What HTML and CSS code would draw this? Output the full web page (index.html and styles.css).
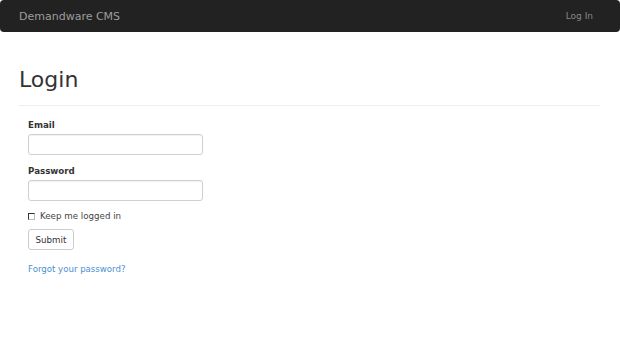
FILE: index.html
```html
<!DOCTYPE html>
<html>
<head>
<meta charset="utf-8">
<link rel="stylesheet" href="styles.css">
</head>
<body>
<nav class="navbar">
  <a class="brand" href="#">Demandware CMS</a>
  <a class="nav-link" href="#">Log In</a>
</nav>
<div class="container">
  <h1 class="page-header">Login</h1>
  <form class="login-form">
    <div class="form-group">
      <label class="label">Email</label>
      <input class="input" type="text">
    </div>
    <div class="form-group">
      <label class="label">Password</label>
      <input class="input" type="password">
    </div>
    <div class="check-row">
      <span class="checkbox"></span>
      <span class="check-label">Keep me logged in</span>
    </div>
    <button class="btn" type="button">Submit</button>
    <a class="forgot" href="#">Forgot your password?</a>
  </form>
</div>
</body>
</html>
```
FILE: styles.css
```css
html, body {
  margin: 0;
  padding: 0;
  background: #fff;
  font-family: "DejaVu Sans", Verdana, sans-serif;
  color: #333;
}
.navbar {
  height: 32px;
  background: #222;
  border-radius: 4px;
  display: flex;
  align-items: center;
  justify-content: space-between;
  padding: 0 27px 0 19px;
}
.brand {
  color: #9d9d9d;
  font-size: 11px;
  text-decoration: none;
}
.nav-link {
  color: #888;
  font-size: 9px;
  text-decoration: none;
}
.container {
  padding: 0 20px 0 19px;
}
.page-header {
  margin: 0;
  padding-top: 34px;
  padding-bottom: 11px;
  font-size: 22px;
  font-weight: 500;
  line-height: 28px;
  color: #333;
  border-bottom: 1px solid #eee;
}
.login-form {
  display: flex;
  flex-direction: column;
  align-items: flex-start;
  padding: 13px 0 0 9px;
}
.form-group {
  display: flex;
  flex-direction: column;
  margin-bottom: 10px;
}
.label {
  font-size: 8.7px;
  font-weight: bold;
  line-height: 13px;
  margin-bottom: 2px;
}
.input {
  width: 175px;
  height: 21px;
  box-sizing: border-box;
  border: 1px solid #d0d0d0;
  border-radius: 3px;
  box-shadow: inset 0 1px 1px rgba(0, 0, 0, 0.06);
  margin: 0;
  padding: 0 6px;
}
.check-row {
  display: flex;
  align-items: center;
  gap: 5px;
  margin-top: -1px;
  height: 13px;
}
.checkbox {
  width: 7px;
  height: 7px;
  border: 1px solid;
  border-color: #333 #bbb #bbb #333;
  box-sizing: border-box;
}
.check-label {
  font-size: 8.7px;
  line-height: 13px;
  color: #444;
}
.btn {
  margin-top: 6px;
  height: 21px;
  width: 46px;
  padding: 0;
  box-sizing: border-box;
  background: #fff;
  border: 1px solid #ccc;
  border-radius: 3px;
  font-family: "DejaVu Sans", Verdana, sans-serif;
  font-size: 8.7px;
  color: #333;
}
.forgot {
  margin-top: 13px;
  font-size: 8.6px;
  line-height: 13px;
  color: #4a90d0;
  text-decoration: none;
}
```
